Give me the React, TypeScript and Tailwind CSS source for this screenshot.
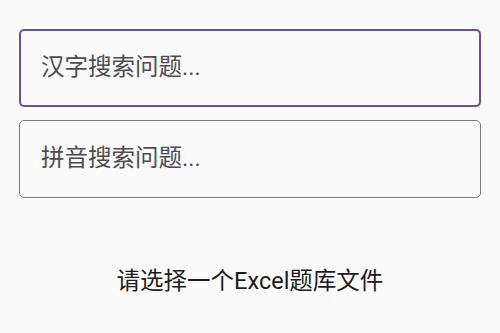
export default function App() {
  return (
    <div
      className="w-[500px] h-[333px] bg-[#fafafa] flex flex-col px-[19px] pt-[29px]"
      style={{ fontFamily: 'Roboto, "Noto Sans CJK SC", sans-serif' }}
    >
      <div className="h-[78px] rounded-[5px] border-2 border-[#6750a4] flex items-center pl-[20px]">
        <span className="text-[23.5px] text-[#4d4b52] leading-none">汉字搜索问题...</span>
      </div>
      <div className="mt-[13px] h-[78px] rounded-[5px] border border-[#7d7b80] flex items-center pl-[21px]">
        <span className="text-[23.5px] text-[#4d4b52] leading-none">拼音搜索问题...</span>
      </div>
      <div className="mt-[71px] flex justify-center">
        <span className="text-[23.5px] text-[#1c1b1f] leading-[24px]">请选择一个Excel题库文件</span>
      </div>
    </div>
  );
}
